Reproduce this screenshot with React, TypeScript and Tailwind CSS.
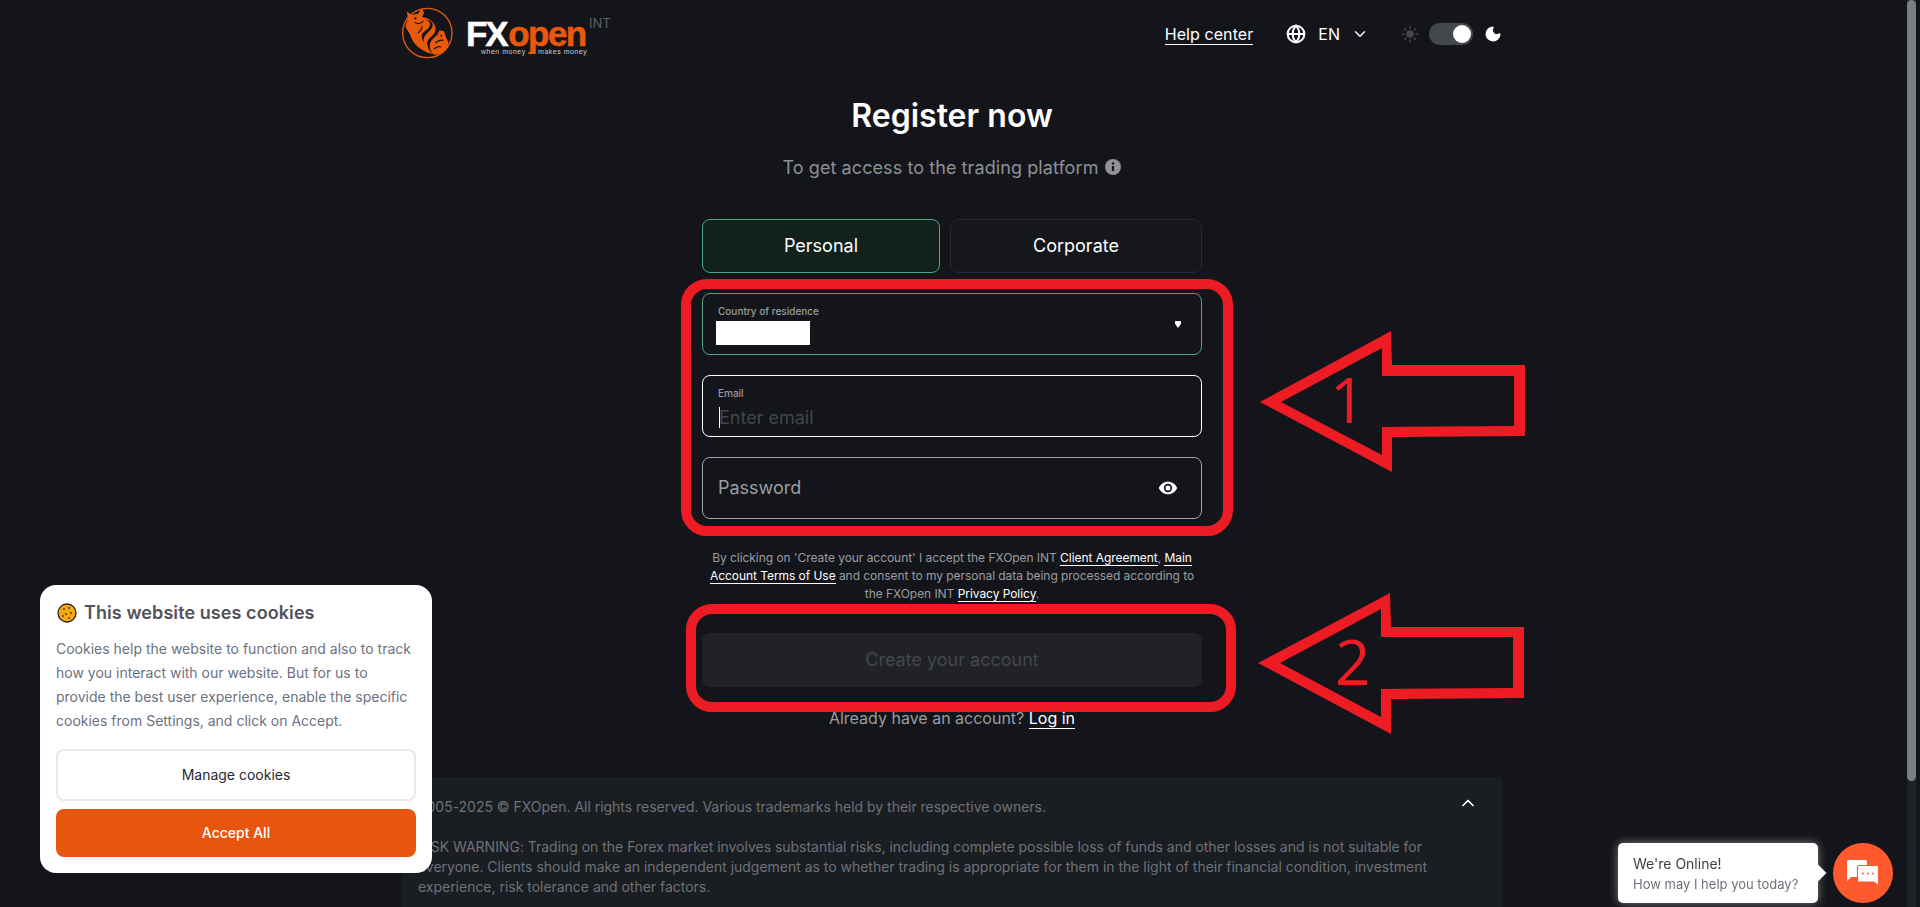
import React from "react";
import { Globe, ChevronDown, ChevronUp, Sun, Moon } from "lucide-react";

function BullLogo() {
  return (
    <svg width="52" height="53" viewBox="0 0 52 53" className="shrink-0">
      <g transform="translate(-4 -4) scale(0.3333)">
        <circle cx="88" cy="90" r="74" fill="none" stroke="#e8590c" strokeWidth="4" />
        <path d="M22 70L30 45L26 25L40 35L60 32L72 15L78 30L72 42C95 45 118 62 112 85C108 100 85 105 88 125C90 140 100 150 110 155C80 150 50 130 40 105C36 90 28 85 22 70Z" fill="#e8590c" />
        <path d="M110 155C135 155 150 140 152 120L145 105L138 85L125 82L118 95C108 105 97 112 95 125C95 140 100 150 110 155Z" fill="#e8590c" />
        <path d="M85 50C105 60 95 75 80 85C70 92 68 105 78 118C72 95 95 90 103 72C108 60 98 52 85 50Z" fill="#13151a" />
        <path d="M50 58C60 64 70 62 76 54M60 90C68 84 72 76 72 70M112 120C120 112 128 110 136 112M108 138C116 130 124 130 130 132" fill="none" stroke="#13151a" strokeWidth="3.5" />
        <circle cx="52" cy="46" r="3.5" fill="#13151a" />
        <circle cx="130" cy="98" r="3" fill="#13151a" />
      </g>
    </svg>
  );
}

function Logo() {
  return (
    <div className="flex items-start h-[53px] font-['Liberation_Sans',sans-serif]">
      <BullLogo />
      <div className="ml-[12px] mt-[13px] flex flex-col w-[120px]">
        <div className="flex items-baseline text-[35px] leading-[27px] font-bold whitespace-nowrap [-webkit-text-stroke:0.5px]">
          <span className="text-white tracking-[-2.2px]">FX</span>
          <span className="text-[#e8590c] tracking-[-1.6px] ml-[2px]">open</span>
        </div>
        <div className="text-[7px] leading-[8px] mt-[1px] ml-[15px] text-[#c9cbce] tracking-[0.5px] whitespace-nowrap">when money <span className="text-[#e8590c]">▬</span> makes money</div>
      </div>
      <span className="ml-[3px] mt-[9px] text-[13px] leading-[14px] text-[#5c5f63] font-['Inter',sans-serif]">INT</span>
    </div>
  );
}

function Header() {
  return (
    <header className="h-[66px] flex items-center justify-between pt-[1px]">
      <Logo />
      <div className="flex items-center text-white text-[16px]">
        <a className="leading-[20px] border-b border-white mt-[1px] tracking-[0.08px]">Help center</a>
        <Globe className="ml-[33px]" size={20} strokeWidth={2.4} />
        <span className="ml-[12px] leading-[20px]">EN</span>
        <ChevronDown className="ml-[11px]" size={18} strokeWidth={1.8} />
        <Sun className="ml-[32px] text-[#43464b] fill-[#43464b]" size={18} />
        <div className="ml-[10px] w-[44px] h-[22px] rounded-full bg-[#44474b] flex items-center justify-end pr-[2px]">
          <div className="w-[18px] h-[18px] rounded-full bg-white" />
        </div>
        <Moon className="ml-[11px] fill-white" size={18} />
      </div>
    </header>
  );
}

function Form() {
  return (
    <section className="w-[500px] mx-auto flex flex-col">
      <div className="flex gap-[10px] h-[54px] mt-[41px] text-[18px] text-white">
        <button className="w-[238px] rounded-[8px] border border-[#4ba982] bg-[#12211c] pb-[1px]">Personal</button>
        <button className="w-[252px] rounded-[8px] border border-[#26292e] bg-[#15171b] pb-[1px]">Corporate</button>
      </div>
      <div className="mt-[20px] h-[62px] rounded-[8px] border border-[#4ba982] pl-[15px] pr-[20px] pt-[11px] relative">
        <div className="text-[10px] leading-[12px] font-medium text-[#9a9da1]">Country of residence</div>
        <div className="mt-[4px] -ml-[2px] w-[94px] h-[24px] bg-white" />
        <div className="absolute right-[20px] top-[27px] w-[6px] h-[7px] bg-white [clip-path:polygon(0_0,100%_0,100%_40%,50%_100%,0_40%)]" />
      </div>
      <div className="mt-[20px] h-[62px] rounded-[8px] border border-white pl-[15px] pt-[11px]">
        <div className="text-[10px] leading-[12px] font-medium text-[#9a9da1]">Email</div>
        <div className="mt-[7px] flex items-center h-[22px]">
          <span className="w-px h-[21px] bg-white ml-[1px] -mr-[1px]" />
          <span className="text-[18px] text-[#43464b]">Enter email</span>
        </div>
      </div>
      <div className="mt-[20px] h-[62px] rounded-[8px] border border-[#a3a5a8] pl-[15px] pr-[23px] flex items-center justify-between">
        <span className="text-[18px] text-[#9a9da1] pb-[2px]">Password</span>
        <svg width="20" height="20" viewBox="0 0 24 24" fill="white"><path d="M12 4.5C7 4.5 2.7 7.6 1 12c1.7 4.4 6 7.5 11 7.5s9.3-3.1 11-7.5c-1.7-4.4-6-7.5-11-7.5Zm0 12.5a5 5 0 1 1 0-10 5 5 0 0 1 0 10Zm0-8a3 3 0 1 0 0 6 3 3 0 0 0 0-6Z" /></svg>
      </div>
      <p className="mt-[30px] text-center text-[12px] leading-[18px] h-[54px] text-[#9a9da1] -mx-[2px] tracking-[-0.05px]">
        By clicking on 'Create your account' I accept the FXOpen INT <a className="text-white border-b border-white">Client Agreement</a>, <a className="text-white border-b border-white">Main Account Terms of Use</a> and consent to my personal data being processed according to the FXOpen INT <a className="text-white border-b border-white">Privacy Policy</a>.
      </p>
      <button className="mt-[30px] h-[54px] rounded-[8px] bg-[#202226] text-[18px] text-[#44474c] pb-[2px]">Create your account</button>
      <p className="mt-[20px] text-center text-[16px] leading-[22px] text-[#9a9da1]">Already have an account? <a className="text-white border-b border-white">Log in</a></p>
    </section>
  );
}

function PageHead() {
  return (
    <div className="flex flex-col items-center">
      <h1 className="mt-[30px] text-[32px] leading-[40px] font-semibold text-white">Register now</h1>
      <div className="mt-[20px] h-[22px] flex items-center gap-[7px] text-[18px] text-[#8f9196] tracking-[0.08px]">
        <span>To get access to the trading platform</span>
        <svg width="16" height="16" viewBox="0 0 16 16">
          <circle cx="8" cy="8" r="8" fill="#8f9196" />
          <circle cx="8" cy="4.5" r="1.2" fill="#13151a" />
          <rect x="6.9" y="7" width="2.2" height="5" fill="#13151a" />
        </svg>
      </div>
    </div>
  );
}

function Footer() {
  return (
    <footer className="mt-[48px] bg-[#1a1d22] rounded-t-[4px] pl-[16px] pr-[56px] pt-[20px] pb-[20px] text-[14px] leading-[20px] text-[#6f7277] relative h-[300px] tracking-[-0.02px]">
      <ChevronUp className="absolute right-[24px] top-[16px] text-white" size={20} />
      <p>2005-2025 © FXOpen. All rights reserved. Various trademarks held by their respective owners.</p>
      <p className="mt-[20px]">RISK WARNING: Trading on the Forex market involves substantial risks, including complete possible loss of funds and other losses and is not suitable for everyone. Clients should make an independent judgement as to whether trading is appropriate for them in the light of their financial condition, investment experience, risk tolerance and other factors.</p>
    </footer>
  );
}

function CookieCard() {
  return (
    <div className="fixed left-[40px] top-[585px] w-[392px] h-[288px] bg-white rounded-[16px] p-[16px] font-['Inter',sans-serif]">
      <div className="flex items-center gap-[7px] h-[24px] ml-[1px]">
        <svg width="20" height="20" viewBox="0 0 20 20"><circle cx="10" cy="10" r="9" fill="#f7a90f" stroke="#222" strokeWidth="1.3" /><circle cx="7" cy="6" r="1" fill="#5a3a10" /><circle cx="12" cy="5" r="1" fill="#5a3a10" /><circle cx="14" cy="10" r="1" fill="#5a3a10" /><circle cx="9" cy="11" r="1" fill="#5a3a10" /><circle cx="6" cy="13" r="1" fill="#5a3a10" /><circle cx="12" cy="15" r="1" fill="#5a3a10" /></svg>
        <h2 className="text-[18px] leading-[24px] font-semibold text-[#52525b] tracking-[0.08px]">This website uses cookies</h2>
      </div>
      <p className="mt-[12px] text-[14px] leading-[24px] text-[#6b7280]">Cookies help the website to function and also to track how you interact with our website. But for us to provide the best user experience, enable the specific cookies from Settings, and click on Accept.</p>
      <button className="mt-[16px] w-full h-[52px] rounded-[8px] border-2 border-[#e8e9eb] text-[14px] text-[#1f2937] pb-[2px]">Manage cookies</button>
      <button className="mt-[8px] w-full h-[48px] rounded-[8px] bg-[#e8560d] text-[14px] font-medium text-white pb-[2px]">Accept All</button>
    </div>
  );
}

function ChatWidget() {
  return (
    <div className="fixed left-[1618px] top-[843px] flex items-center font-['Inter',sans-serif]">
      <div className="relative w-[200px] h-[60px] bg-white rounded-[5px] pl-[15px] pt-[11px] shadow-[0_0_10px_rgba(255,255,255,0.45)]">
        <div className="text-[14px] leading-[20px] text-[#3f3f46]">We're Online!</div>
        <div className="text-[13px] leading-[20px] text-[#71717a] whitespace-nowrap">How may I help you today?</div>
        <div className="absolute -right-[6px] top-[24px] w-[12px] h-[12px] rotate-45 bg-white" />
      </div>
      <div className="ml-[15px] w-[60px] h-[60px] rounded-full bg-[#ff5a2e] flex items-center justify-center">
        <svg width="32" height="26" viewBox="0 0 32 26">
          <path d="M2 0h16a2 2 0 0 1 2 2v15H4l-4 4V2a2 2 0 0 1 2-2Z" fill="white" />
          <path d="M12 5.5h18a1.5 1.5 0 0 1 1.5 1.5v19l-4.5-4H12a1.5 1.5 0 0 1-1.5-1.5V7A1.5 1.5 0 0 1 12 5.5Z" fill="white" stroke="#ff5a2e" strokeWidth="1.2" />
          <circle cx="16" cy="13.5" r="1" fill="#ff5a2e" /><circle cx="21" cy="13.5" r="1" fill="#ff5a2e" /><circle cx="26" cy="13.5" r="1" fill="#ff5a2e" />
        </svg>
      </div>
    </div>
  );
}

function Annotations() {
  return (
    <div className="fixed inset-0 pointer-events-none">
      <div className="absolute left-[681px] top-[279px] w-[552px] h-[257px] rounded-[26px] border-[10px] border-[#ed1c24]" />
      <div className="absolute left-[686px] top-[604px] w-[550px] h-[108px] rounded-[26px] border-[10px] border-[#ed1c24]" />
      <svg className="absolute left-0 top-0" width="1920" height="907">
        <path fillRule="evenodd" fill="#ed1c24" d="M1260 402L1391 331L1392 365L1525 365L1525 436L1392 437L1392 472ZM1281 402L1382 348L1382 376L1514 376L1514 426L1382 427L1382 455Z" />
        <path fillRule="evenodd" fill="#ed1c24" d="M1258 663L1390 593L1391 627L1524 627L1524 698L1391 699L1391 734ZM1280 663L1381 609L1381 637L1513 637L1513 688L1381 689L1381 717Z" />
      </svg>
      <span className="absolute left-[1330px] top-[359px] text-[62px] leading-[80px] text-[#ed1c24] font-['Open_Sans',sans-serif]">1</span>
      <span className="absolute left-[1335px] top-[621px] text-[62px] leading-[80px] text-[#ed1c24] font-['Open_Sans',sans-serif]">2</span>
    </div>
  );
}

export default function App() {
  return (
    <div className="h-[907px] overflow-hidden flex bg-[#13151a] font-['Inter',sans-serif]">
      <main className="w-[1904px] h-[907px] overflow-hidden">
        <div className="w-[1100px] mx-auto">
          <Header />
          <PageHead />
          <Form />
          <Footer />
        </div>
      </main>
      <div className="w-[16px] h-[907px] pl-[3px] pr-[4px]">
        <div className="h-full bg-[#1e2227]">
          <div className="h-[781px] rounded-[5px] bg-[#7a7e83]" />
        </div>
      </div>
      <CookieCard />
      <ChatWidget />
      <Annotations />
    </div>
  );
}
